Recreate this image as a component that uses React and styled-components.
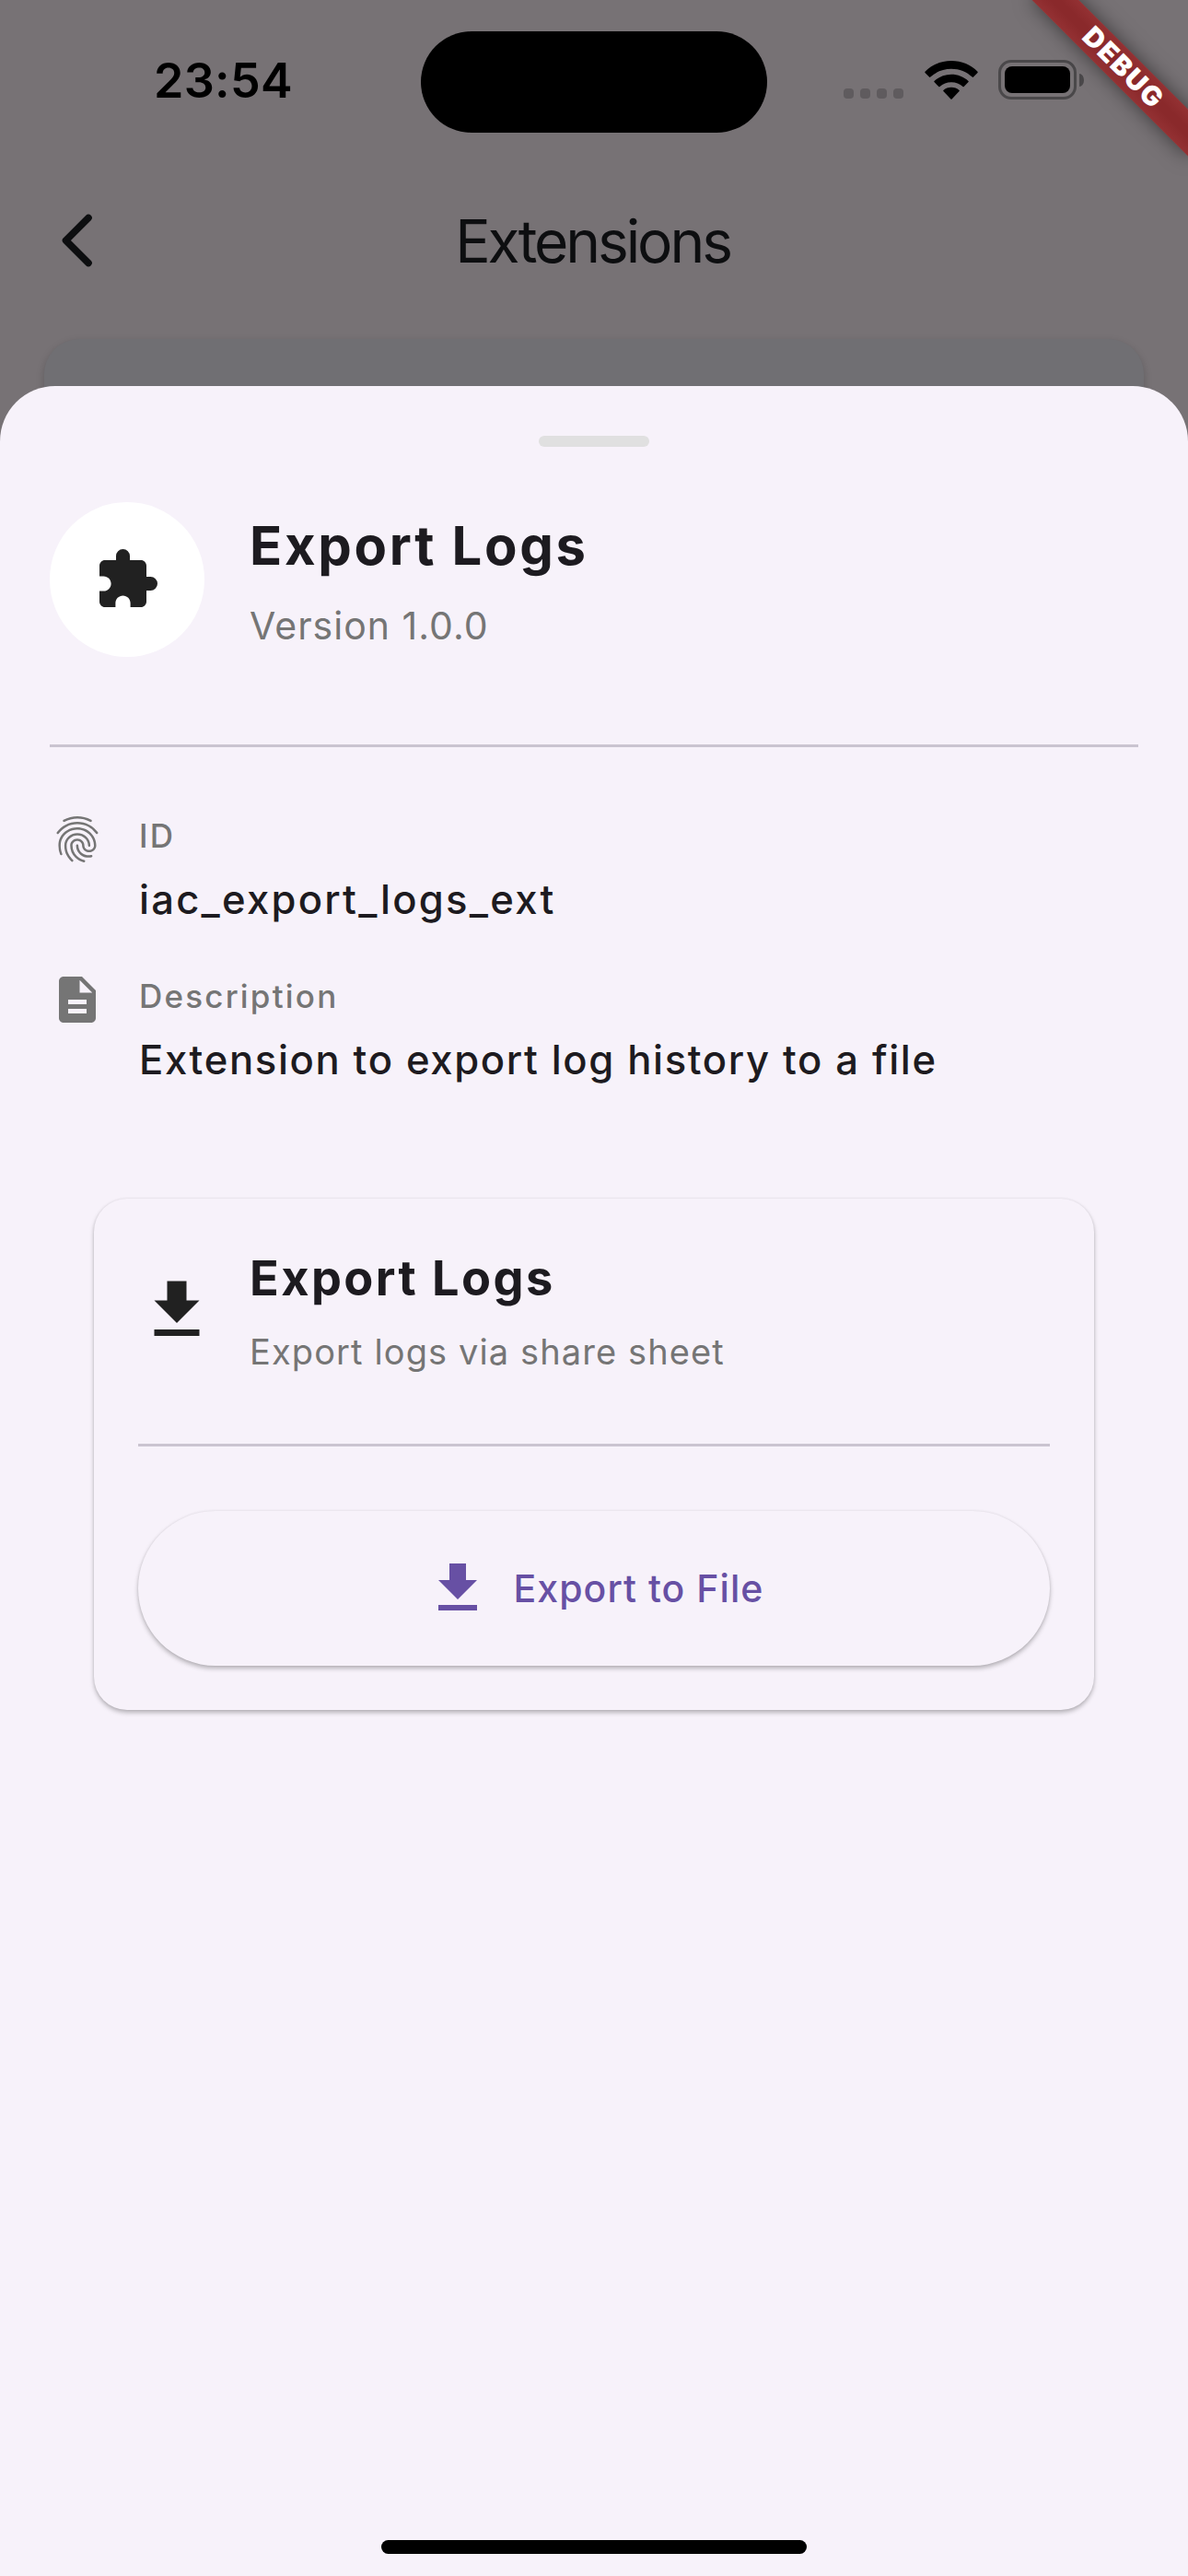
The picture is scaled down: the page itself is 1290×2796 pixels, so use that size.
import React from "react";
import styled, { createGlobalStyle } from "styled-components";
import { MdExtension, MdFingerprint, MdDescription, MdFileDownload } from "react-icons/md";

const GlobalStyle = createGlobalStyle`
  *, *::before, *::after { box-sizing: border-box; }
  body { margin: 0; background: #777275; }
  svg { display: block; flex: none; }
`;

const Screen = styled.main`
  position: relative;
  display: flex;
  flex-direction: column;
  width: 1290px;
  height: 2796px;
  overflow: hidden;
  background: #777275;
  font-family: Inter, "Liberation Sans", sans-serif;
  color: #1d1b20;
`;

/* Status bar */

const StatusBar = styled.header`
  display: grid;
  grid-template-columns: 457px 376px 457px;
  align-items: start;
  height: 177px;
`;

const Clock = styled.time`
  padding: 52px 0 0 167px;
  font-size: 52px;
  font-weight: 600;
  line-height: 72px;
  letter-spacing: 0.3px;
  color: #000;
`;

const Island = styled.div`
  height: 110px;
  margin-top: 34px;
  border-radius: 55px;
  background: #000;
`;

const StatusIcons = styled.div`
  display: flex;
  align-items: center;
  padding: 65px 0 0 83px;
`;

const SignalDots = styled.div`
  display: flex;
  gap: 7px;
  margin: 30px 23px 0 0;
`;

const SignalDot = styled.span`
  width: 11px;
  height: 11px;
  border-radius: 4px;
  background: #5f5b5e;
`;

const BatteryShell = styled.div`
  width: 85px;
  height: 43px;
  margin-left: 22px;
  padding: 4px;
  border: 3px solid #4a484a;
  border-radius: 14px;
`;

const BatteryLevel = styled.div`
  height: 29px;
  border-radius: 8px;
  background: #000;
`;

const BatteryCap = styled.div`
  width: 5px;
  height: 14px;
  margin-left: 3px;
  border-radius: 0 5px 5px 0 / 0 7px 7px 0;
  background: #4a484a;
`;

/* Dimmed page */

const AppBar = styled.nav`
  display: grid;
  grid-template-columns: 168px 1fr 168px;
  align-items: center;
  height: 168px;
  color: #0d0e10;
`;

const BackButton = styled.button`
  display: flex;
  justify-content: center;
  padding: 0;
  border: 0;
  background: none;
  color: inherit;
`;

const PageTitle = styled.h1`
  margin: 2px 3px 0 0;
  font-size: 64px;
  font-weight: 400;
  line-height: 84px;
  letter-spacing: -3.06px;
  text-align: center;
`;

const PageCard = styled.div`
  height: 240px;
  margin: 23px 48px 0;
  border-radius: 38px;
  background: #706f73;
  box-shadow: 0 4px 10px rgba(0, 0, 0, 0.2);
`;

/* Debug ribbon */

const RibbonCorner = styled.div`
  position: absolute;
  top: 0;
  right: 0;
  width: 260px;
  height: 260px;
  overflow: hidden;
`;

const Ribbon = styled.div`
  position: absolute;
  top: 54px;
  left: 68px;
  width: 240px;
  height: 36px;
  padding-left: 5px;
  transform: rotate(45deg);
  background: linear-gradient(#943133, #8a292b 40%, #8a292b 60%, #943133);
  box-shadow: 0 0 21px rgba(0, 0, 0, 0.5);
  color: #fff;
  font-size: 29.5px;
  font-weight: 900;
  line-height: 35px;
  letter-spacing: 1.7px;
  text-align: center;
`;

/* Bottom sheet */

const Sheet = styled.section`
  position: absolute;
  left: 0;
  right: 0;
  bottom: 0;
  display: flex;
  flex-direction: column;
  height: 2377px;
  padding: 54px 54px 24px;
  border-radius: 60px 60px 0 0;
  background: #f7f2fa;
`;

const DragHandle = styled.div`
  flex: none;
  align-self: center;
  width: 120px;
  height: 12px;
  border-radius: 6px;
  background: #e0e0e0;
`;

const SheetHeader = styled.div`
  display: flex;
  gap: 49px;
  height: 168px;
  margin-top: 60px;
`;

const Avatar = styled.div`
  display: flex;
  align-items: center;
  justify-content: center;
  width: 168px;
  height: 168px;
  border-radius: 50%;
  background: #fff;
  color: #212121;
`;

const HeaderText = styled.div`
  padding-top: 11px;
`;

const Title = styled.h2`
  margin: 0;
  font-size: ${(p) => (p.$small ? 52.3 : 58)}px;
  font-weight: 700;
  line-height: 72px;
  letter-spacing: ${(p) => (p.$small ? 2.42 : 2.68)}px;
`;

const Version = styled.p`
  margin: 21px 0 0;
  font-size: 41px;
  line-height: 60px;
  letter-spacing: 1.02px;
  color: #757575;
`;

const Divider = styled.hr`
  flex: none;
  width: 100%;
  height: 3px;
  margin: ${(p) => p.$top}px 0 0;
  border: 0;
  background: #cac4d0;
`;

const Details = styled.div`
  display: flex;
  flex-direction: column;
  gap: 51px;
  margin-top: 70px;
`;

const Detail = styled.div`
  display: flex;
  gap: 37px;
  color: #757575;
`;

const Label = styled.div`
  font-size: 35px;
  font-weight: 500;
  line-height: 52px;
  letter-spacing: 2.2px;
`;

const Value = styled.div`
  margin-top: 17px;
  font-size: 43.6px;
  font-weight: 500;
  line-height: 54px;
  letter-spacing: ${(p) => p.$spacing}px;
  color: #1d1b20;
`;

const raised = `
  background: #f7f2fa;
  box-shadow: 0 3px 5px rgba(0, 0, 0, 0.26), 0 0 3px rgba(0, 0, 0, 0.08);
`;

const ActionCard = styled.article`
  height: 555px;
  margin: 123px 48px 0;
  padding: 48px;
  border-radius: 36px;
  ${raised}
`;

const ActionHeader = styled.div`
  display: flex;
  align-items: center;
  gap: 37px;
  height: 146px;
  color: #212121;
`;

const ActionText = styled.div`
  color: #1d1b20;
`;

const Caption = styled.p`
  margin: 17px 0 0;
  font-size: 38px;
  line-height: 54px;
  letter-spacing: 1.11px;
  color: #757575;
`;

const ExportButton = styled.button`
  display: flex;
  align-items: center;
  justify-content: center;
  gap: 25px;
  width: 100%;
  height: 168px;
  margin-top: 70px;
  padding: 0;
  border: 0;
  border-radius: 84px;
  ${raised}
  color: #6750a4;
  font-family: inherit;
  font-size: 41px;
  font-weight: 500;
  letter-spacing: 1.05px;
`;

const HomeIndicator = styled.div`
  flex: none;
  align-self: center;
  width: 462px;
  height: 15px;
  margin-top: auto;
  border-radius: 8px;
  background: #000;
`;

function WifiIcon() {
  return (
    <svg width="58" height="42" viewBox="0 0 58 42" fill="#000">
      <path d="M29 0C17.900 0 7.600 4.400 0.500 11.700Q0 12.300 0.500 12.900L5 17.600Q5.700 18.200 6.300 17.600C12.300 11.900 20.300 8.700 29 8.700S45.700 11.900 51.700 17.600Q52.300 18.200 53 17.600L57.500 12.900Q58 12.300 57.500 11.700C50.400 4.400 40.100 0 29 0Z" />
      <path d="M29 14.700C21.900 14.700 15.400 17.400 10.500 21.900Q9.900 22.500 10.500 23.100L15.300 28Q15.900 28.500 16.500 28C19.800 25 24.200 23.200 29 23.200S38.200 25 41.500 28Q42.100 28.500 42.700 28L47.500 23.100Q48.100 22.500 47.500 21.900C42.600 17.400 36.100 14.700 29 14.700Z" />
      <path d="M29 28.800C25.700 28.800 22.700 30 20.400 31.900Q19.800 32.500 20.400 33.100L28.400 41.400Q29 42 29.600 41.400L37.600 33.100Q38.200 32.500 37.600 31.900C35.300 30 32.300 28.800 29 28.800Z" />
    </svg>
  );
}

function ChevronIcon() {
  return (
    <svg width="34" height="60" viewBox="0 0 34 60" fill="none" stroke="currentColor" strokeWidth="7.600" strokeLinecap="round" strokeLinejoin="round">
      <path d="M29 5.500L4.500 30L29 54.500" />
    </svg>
  );
}

export default function App() {
  return (
    <Screen>
      <GlobalStyle />
      <StatusBar>
        <Clock>23:54</Clock>
        <Island />
        <StatusIcons>
          <SignalDots>
            <SignalDot />
            <SignalDot />
            <SignalDot />
            <SignalDot />
          </SignalDots>
          <WifiIcon />
          <BatteryShell>
            <BatteryLevel />
          </BatteryShell>
          <BatteryCap />
        </StatusIcons>
      </StatusBar>

      <AppBar>
        <BackButton aria-label="Back">
          <ChevronIcon />
        </BackButton>
        <PageTitle>Extensions</PageTitle>
      </AppBar>
      <PageCard />

      <Sheet>
        <DragHandle />
        <SheetHeader>
          <Avatar>
            <MdExtension size={72} />
          </Avatar>
          <HeaderText>
            <Title>Export Logs</Title>
            <Version>Version 1.0.0</Version>
          </HeaderText>
        </SheetHeader>
        <Divider $top={95} />

        <Details>
          <Detail>
            <MdFingerprint size={60} />
            <div>
              <Label>ID</Label>
              <Value $spacing={2.24}>iac_export_logs_ext</Value>
            </div>
          </Detail>
          <Detail>
            <MdDescription size={60} />
            <div>
              <Label>Description</Label>
              <Value $spacing={1.64}>Extension to export log history to a file</Value>
            </div>
          </Detail>
        </Details>

        <ActionCard>
          <ActionHeader>
            <MdFileDownload size={84} />
            <ActionText>
              <Title $small>Export Logs</Title>
              <Caption>Export logs via share sheet</Caption>
            </ActionText>
          </ActionHeader>
          <Divider $top={72} />
          <ExportButton>
            <MdFileDownload size={72} />
            Export to File
          </ExportButton>
        </ActionCard>

        <HomeIndicator />
      </Sheet>

      <RibbonCorner>
        <Ribbon>DEBUG</Ribbon>
      </RibbonCorner>
    </Screen>
  );
}
